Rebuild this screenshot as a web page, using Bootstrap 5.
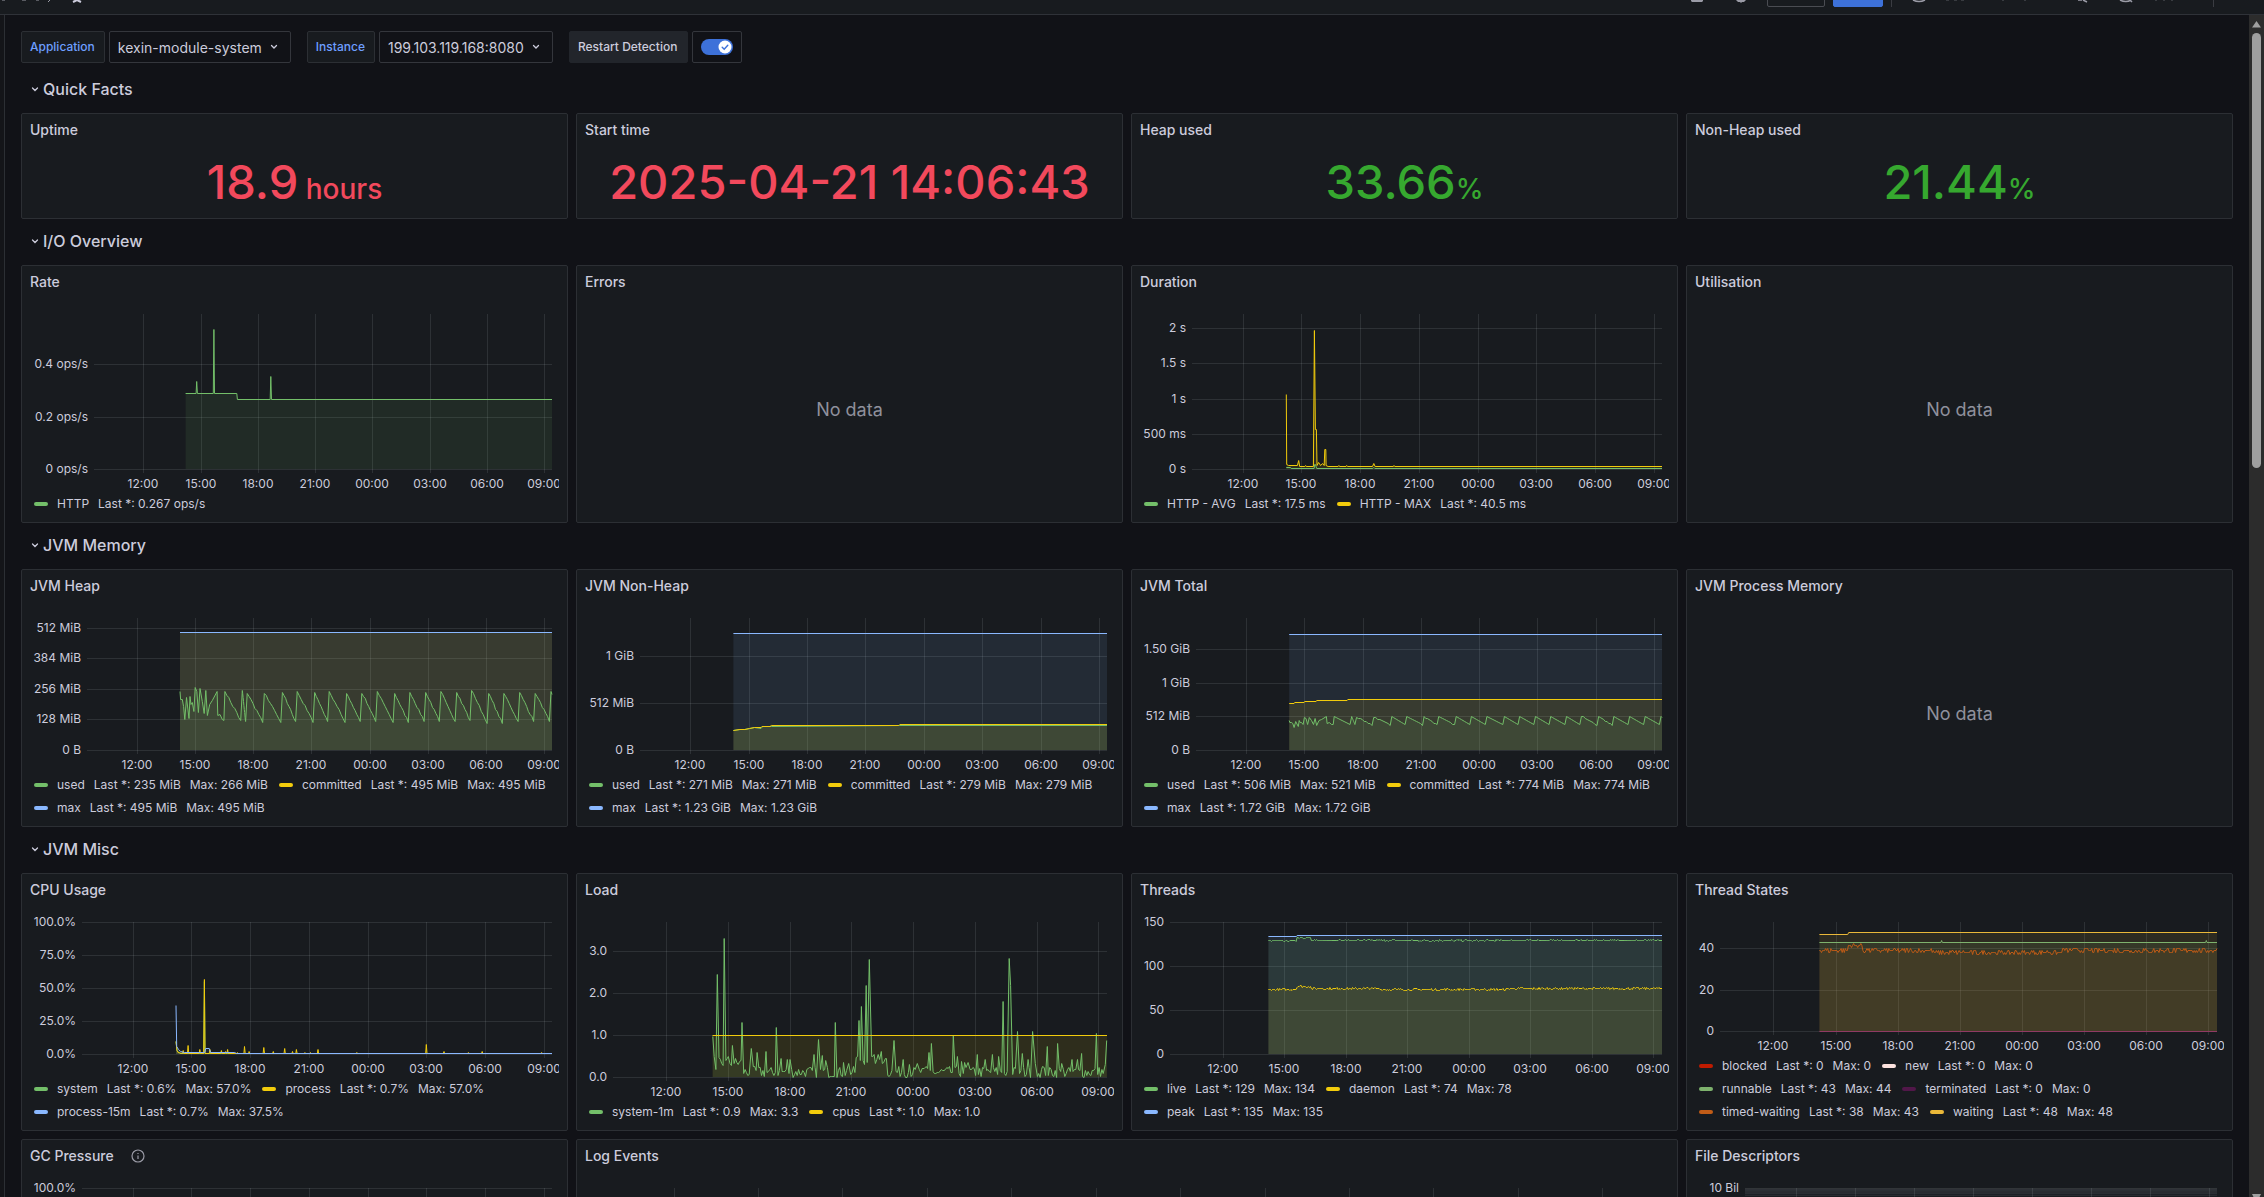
<!DOCTYPE html>
<html lang="en" data-bs-theme="dark">
<head>
<meta charset="utf-8">
<meta name="viewport" content="width=device-width, initial-scale=1">
<title>JVM (Micrometer)</title>
<link href="https://cdn.jsdelivr.net/npm/bootstrap@5.3.0/dist/css/bootstrap.min.css" rel="stylesheet">
<style>
  :root { --canvas:#111217; --surface:#181b1f; --line:#2c2f34; --ink:#ccccdc; --blue:#3d71d9; --link:#6e9fff; }
  body { font-family: Inter, Roboto, "Liberation Sans", sans-serif; font-size:14px; background:var(--canvas); color:var(--ink); height:100vh; overflow:hidden; }
  .topbar { height:15px; background:var(--surface); border-bottom:1px solid #2f3238; padding-bottom:7px; color:#9a9ba6; flex:none; overflow:hidden; }
  .topbar svg { display:block; flex:none; }
  .topbar .tool { height:32px; padding:0; border-radius:2px; border:1px solid #4a4c52; flex:none; }
  .topbar .tool-edit { width:58px; margin-left:21px; background:transparent; }
  .topbar .tool-share { width:50px; margin-left:8px; background:var(--blue); border-color:var(--blue); }
  .topbar .split { width:1px; height:12px; background:#3a3c42; }
  .dock { width:5px; border-right:1px solid var(--line); background:#141519; flex:none; }
  .board { padding:16px 16px 0; min-width:0; }
  .track { width:15px; background:#2c2c2c; flex:none; padding:6px 0 0; }
  .track .thumb { width:9px; height:37%; margin-top:5px; border-radius:5px; background:#9f9f9f; }
  .vars { gap:16px; margin-bottom:12px; }
  .vars .pair { gap:4px; }
  .tag { height:32px; padding:0 9px 0 8px; font-size:12px; font-weight:500; border:1px solid var(--line); border-radius:2px; background:var(--surface); color:var(--link); }
  .tag-plain { padding-right:10px; background:#22252b; border-color:#22252b; color:var(--ink); }
  .pick { height:32px; padding:0 28px 0 8px; font-size:14px; color:var(--ink); border:1px solid #34363c; border-radius:2px; appearance:none;
    background:var(--canvas) url("data:image/svg+xml,%3Csvg xmlns='http://www.w3.org/2000/svg' width='8' height='6'%3E%3Cpath d='M1.500 1.500 4 4l2.500-2.500' fill='none' stroke='%23ccccdc' stroke-width='1.300' stroke-linecap='round'/%3E%3C/svg%3E") no-repeat right 12px center; }
  .flip { height:32px; width:50px; border:1px solid #34363c; border-radius:2px; }
  .flip input { appearance:none; width:32px; height:16px; margin:0; border-radius:8px; background:var(--blue) url("data:image/svg+xml,%3Csvg xmlns='http://www.w3.org/2000/svg' width='32' height='16'%3E%3Ccircle cx='24' cy='8' r='6.500' fill='white'/%3E%3Cpath d='M21.200 8.200l2 2 3.600-4' fill='none' stroke='%233d71d9' stroke-width='1.400' stroke-linecap='round'/%3E%3C/svg%3E"); }
  .section-head { height:30px; margin-bottom:8px; padding:0 0 2px 10px; gap:4px; font-size:16px; font-weight:500; line-height:28px; color:var(--ink); background:none; border:0; }
  .band { --bs-gutter-x:8px; margin-bottom:8px; }
  .panel { height:258px; background:var(--surface); border:1px solid var(--line); border-radius:2px; overflow:hidden; }
  .panel-stat { height:106px; }
  .panel h2 { height:32px; line-height:32px; margin:0; padding:0 8px; font-size:14px; font-weight:500; color:var(--ink); gap:17px; flex:none; }
  .stat { padding-bottom:2px; font-size:47px; font-weight:500; line-height:1; }
  .stat-unit { font-size:28px; }
  .stat-red { color:#f2495c; }
  .stat-green { color:#36a82f; }
  .nodata { padding-bottom:2px; font-size:18px; color:#8f909c; }
  .plot { min-height:0; margin:0 8px; }
  .plot svg { display:block; width:100%; height:100%; }
  .plot text { font-size:12px; fill:var(--ink); }
  .legend { margin:0 8px; padding:0 0 7px 4px; column-gap:11px; font-size:12px; line-height:23px; }
  .legend .entry { gap:9px; }
  .legend .swatch { width:14px; height:4px; border-radius:2px; }
</style>
</head>
<body class="d-flex flex-column">

<header class="topbar d-flex align-items-end">
  <svg width="90" height="7" viewBox="0 0 90 7"><g fill="none" stroke="#9a9ba6"><path d="M2 0h3M22 0h4M36 0h3M50 0l-2 2"/><path stroke="#ccccdc" stroke-width="2" d="M73 2l4-2 4 2"/></g></svg>
  <div class="d-flex align-items-end ms-auto">
    <svg width="56" height="7" viewBox="0 0 56 7"><path d="M1 0h12v1l-1 1H2L1 1z" fill="#9a9ba6"/><path d="M46 0h10l-2 2h-2l-1 1-1-1h-2z" fill="#9a9ba6"/></svg>
    <button class="tool tool-edit" type="button" aria-label="Edit"></button>
    <button class="tool tool-share" type="button" aria-label="Share"></button>
    <span class="split ms-2"></span>
    <svg width="321" height="7" viewBox="0 0 321 7"><g fill="none" stroke="#9a9ba6" stroke-width="1.500"><path d="M21 0q6 3 12 0M186 0h4M191 0l4 2M228 0q6 3 11 0M238 0l2 2"/><path stroke-width="1" stroke-opacity=".5" d="M54 0h3M62 0h3M69 0h3M110 0h2M132 0h2M263 0h2M271 0h2M279 0h2"/></g></svg>
    <span class="split"></span>
    <svg width="50" height="7"></svg>
  </div>
</header>

<div class="d-flex flex-grow-1" style="min-height:0">
  <div class="dock"></div>
  <main class="board flex-grow-1 overflow-hidden">
    <form class="vars d-flex">
      <div class="pair d-flex">
        <label class="tag d-flex align-items-center" for="app">Application</label>
        <select class="pick" id="app"><option>kexin-module-system</option></select>
      </div>
      <div class="pair d-flex">
        <label class="tag d-flex align-items-center" for="inst">Instance</label>
        <select class="pick" id="inst"><option>199.103.119.168:8080</option></select>
      </div>
      <div class="pair d-flex">
        <label class="tag tag-plain d-flex align-items-center" for="restart">Restart Detection</label>
        <span class="flip d-flex align-items-center justify-content-center"><input type="checkbox" role="switch" id="restart" checked></span>
      </div>
    </form>
    <div id="board"></div>
  </main>
  <div class="track d-flex flex-column align-items-center">
    <svg width="9" height="7" viewBox="0 0 9 7"><path d="M4.500 0 9 6.500H0z" fill="#9f9f9f"/></svg>
    <div class="thumb"></div>
    <svg class="mt-auto" width="9" height="3" viewBox="0 0 9 3"><path d="M0 0h9L7.500 3h-6z" fill="#9f9f9f"/></svg>
  </div>
</div>

<script>
// Time is in minutes since the process start; the window spans 24 hours.
const T0 = -288, T1 = 1152, FIRST = -133;
const GREEN = '#73bf69', YELLOW = '#f2cc0c', BLUE = '#8ab8ff';
let seed = 7;
const rnd = () => (seed = (seed * 16807) % 2147483647) / 2147483647;
const flat = v => [[0, v], [T1, v]];
const spikes = (base, list, w = 2) => {
  const out = [[0, base]];
  list.forEach(([t, v]) => out.push([t - w, base], [t, v], [t + w, base]));
  return out.concat([[T1, base]]);
};
const noisy = (level, amp, step = 3, from = 0) => {
  const out = [];
  for (let t = from; t <= T1; t += step) out.push([t, level(t) + Math.round((rnd() - .5) * 2 * amp)]);
  return out;
};
const at = (pts, t) => {
  for (let i = 1; i < pts.length; i++) if (pts[i][0] >= t) {
    const [a, b] = [pts[i - 1], pts[i]];
    return a[1] + (b[1] - a[1]) * (t - a[0]) / ((b[0] - a[0]) || 1);
  }
  return pts[pts.length - 1][1];
};

const heap = [[0,247],[2,212],[7,212],[11,184],[15,131],[20,223],[28,135],[31,226],[34,195],[38,200],[43,163],[47,265],[52,247],[57,160],[62,259],[69,205],[75,156],[80,252],[85,145],[92,191],[100,209],[115,247],[117,145],[124,153],[131,132],[136,125]];
const peaks = [139,193,208,261,317,363,417,462,516,563,611,665,712,761,808,857,903,956,1003,1052,1100,1149];
peaks.forEach((p, i) => {
  const top = [247,251,240,241,243,246,243,247,241,241,246,239,243,243,246,243,252,238,240,243,241,248][i];
  heap.push([p, top]);
  const next = peaks[i + 1];
  if (!next) return heap.push([T1, 235]);
  const low = [125,121,119,118,122,118,120,119,121,122,118,118,123,121,122,126,115,114,121,122,122][i], end = next - 5;
  for (let k = 1; k < 8; k++) heap.push([p + (end - p) * k / 8, top + (low - top) * k / 8 + (rnd() - .3) * 8]);
  heap.push([end, low]);
});
const nonheap = [[0,216],[20,224],[35,229],[50,236],[65,245],[85,240],[90,258],[117,266],[510,268],[513,271],[T1,271]];
const total = heap.map(([t, v]) => [t, v + at(nonheap, t)]);

const bursts = [[16,2.46],[36,3.3],[48,.5],[60,.75],[88,1.3],[115,.7],[132,.6],[158,.63],[188,1.2],[202,.46],[220,.44],[228,.44],[298,.55],[311,.9],[322,.52],[332,.4],[360,1.32],[384,.36],[399,.33],[429,1.35],[436,1.7],[450,2.2],[459,2.8],[466,.5],[481,.42],[494,.63],[506,.46],[531,.87],[558,.44],[576,.32],[599,.33],[619,.22],[633,.6],[640,.8],[704,1],[716,.5],[728,.38],[737,.35],[747,.35],[774,.55],[797,.42],[818,.55],[836,.5],[849,1.8],[867,2.84],[871,2.2],[891,1.1],[905,.58],[922,.42],[935,1.1],[943,.33],[964,.25],[978,.73],[1008,.82],[1020,.33],[1050,.42],[1066,.42],[1078,.56],[1121,1.04],[1147,.3],[1151,.87]];
const load = [[3,.97],[7,.5],[12,.2]];
for (let t = 17; t < T1; t += 4) {
  const near = bursts.some(b => Math.abs(b[0] - t) < 3);
  if (!near) load.push([t, (t > 420 && t < 510 ? .3 : t < 90 ? .22 : 0) + rnd() * .26]);
}
load.push(...bursts);
load.sort((a, b) => a[0] - b[0]);

const liveLevel = t => t > 82 && t < 125 ? 133 : t < 82 ? 129 : t < 330 ? 130 : t < 700 ? 129.400 : 130;
const daemonLevel = t => t > 82 && t < 125 ? 77 : t < 82 ? 74 : t < 330 ? 75.300 : t < 700 ? 74 : 75.300;
const waitLevel = t => t > 83 && t < 125 ? 41.500 : t < 82 ? 39 : t < 330 ? 39.300 : t < 700 ? 38 : 39.200;

const sections = [
  { title: 'Quick Facts', panels: [
    { title: 'Uptime', stat: '18.9', unit: '\u00a0hours', tone: 'red' },
    { title: 'Start time', stat: '2025-04-21 14:06:43', tone: 'red' },
    { title: 'Heap used', stat: '33.66', unit: '%', tone: 'green' },
    { title: 'Non-Heap used', stat: '21.44', unit: '%', tone: 'green' } ] },
  { title: 'I/O Overview', panels: [
    { title: 'Rate', left: 64, max: .5905, y: [[0,'0 ops/s'],[.2,'0.2 ops/s'],[.4,'0.4 ops/s']],
      series: [{ c: GREEN, d: [[0,.29],[33,.29],[35,.336],[37,.29],[87,.29],[89,.534],[91,.29],[161,.29],[163,.267],[266,.267],[268,.355],[270,.267],[T1,.267]] }],
      legend: [[GREEN,'HTTP','Last *: 0.267 ops/s']] },
    { title: 'Errors' },
    { title: 'Duration', left: 52, max: 2.2, y: [[0,'0 s'],[.5,'500 ms'],[1,'1 s'],[1.5,'1.5 s'],[2,'2 s']],
      series: [
        { c: GREEN, d: [[1,.03],[14,.03],[16,.0175],[86,.0175],[88,.07],[90,.07],[94,.0175],[266,.0175],[269,.03],[272,.0175],[T1,.0175]] },
        { c: YELLOW, d: [[1,1.064],[2,.07],[8,.055],[35,.05],[39,.13],[42,.04],[58,.04],[60,.055],[62,.04],[84,.04],[87,1.97],[90,.57],[93,.57],[95,.06],[100,.1],[106,.06],[112,.08],[117,.06],[119,.28],[122,.28],[123,.06],[129,.04],[160,.04],[162,.055],[164,.04],[184,.04],[186,.055],[188,.04],[265,.04],[269,.085],[273,.04],[329,.04],[331,.055],[333,.04],[T1,.04]] }],
      legend: [[GREEN,'HTTP - AVG','Last *: 17.5 ms'],[YELLOW,'HTTP - MAX','Last *: 40.5 ms']] },
    { title: 'Utilisation' } ] },
  { title: 'JVM Memory', panels: [
    { title: 'JVM Heap', left: 57, max: 553.700, y: [[0,'0 B'],[128,'128 MiB'],[256,'256 MiB'],[384,'384 MiB'],[512,'512 MiB']],
      series: [{ c: GREEN, d: heap },{ c: YELLOW, d: flat(495) },{ c: BLUE, d: flat(495) }],
      legend: [[GREEN,'used','Last *: 235 MiB','Max: 266 MiB'],[YELLOW,'committed','Last *: 495 MiB','Max: 495 MiB'],[BLUE,'max','Last *: 495 MiB','Max: 495 MiB']] },
    { title: 'JVM Non-Heap', left: 55, max: 1436, y: [[0,'0 B'],[512,'512 MiB'],[1024,'1 GiB']],
      series: [{ c: GREEN, d: nonheap },{ c: YELLOW, d: [[0,219],[20,226],[35,231],[50,240],[65,250],[85,252],[88,260],[113,264],[117,271],[510,272],[513,282],[T1,282]] },{ c: BLUE, d: flat(1270) }],
      legend: [[GREEN,'used','Last *: 271 MiB','Max: 271 MiB'],[YELLOW,'committed','Last *: 279 MiB','Max: 279 MiB'],[BLUE,'max','Last *: 1.23 GiB','Max: 1.23 GiB']] },
    { title: 'JVM Total', left: 56, max: 2005, y: [[0,'0 B'],[512,'512 MiB'],[1024,'1 GiB'],[1536,'1.50 GiB']],
      series: [{ c: GREEN, d: total },{ c: YELLOW, d: [[0,715],[15,715],[17,732],[46,732],[48,747],[83,747],[85,762],[179,762],[181,776],[T1,776]] },{ c: BLUE, d: flat(1765) }],
      legend: [[GREEN,'used','Last *: 506 MiB','Max: 521 MiB'],[YELLOW,'committed','Last *: 774 MiB','Max: 774 MiB'],[BLUE,'max','Last *: 1.72 GiB','Max: 1.72 GiB']] },
    { title: 'JVM Process Memory' } ] },
  { title: 'JVM Misc', panels: [
    { title: 'CPU Usage', left: 52, max: 100, y: [[0,'0.0%'],[25,'25.0%'],[50,'50.0%'],[75,'75.0%'],[100,'100.0%']],
      series: [
        { c: GREEN, d: [[0,10],[3,3],[12,1],[85,1],[87,55],[89,1],[T1,.6]] },
        { c: YELLOW, d: [[0,10],[3,3],[6,1.2]].concat(spikes(.7, [[22,3],[37,7],[73,4],[87,57],[104,4],[139,3],[152,2.5],[158,4],[188,1.8],[210,6],[224,2.5],[269,5.5],[298,2.5],[333,4.5],[357,2.5],[369,4],[395,1.5],[412,1.5],[435,4],[554,1.5],[767,7.5],[821,2.5],[896,1.5],[938,2.5],[1120,1.5]]).slice(1)) },
        { c: BLUE, d: [[0,37.5],[2,6],[8,4],[14,2],[25,1.2],[88,1.2],[91,4.5],[102,4.5],[106,1.5],[180,1.2],[185,.6],[T1,.6]] }],
      legend: [[GREEN,'system','Last *: 0.6%','Max: 57.0%'],[YELLOW,'process','Last *: 0.7%','Max: 57.0%'],[BLUE,'process-15m','Last *: 0.7%','Max: 37.5%']], wrapAfter: 2 },
    { title: 'Load', left: 28, max: 3.69, y: [[0,'0.0'],[1,'1.0'],[2,'2.0'],[3,'3.0']],
      series: [{ c: GREEN, d: load },{ c: YELLOW, d: [[2,1],[T1,1]] }],
      legend: [[GREEN,'system-1m','Last *: 0.9','Max: 3.3'],[YELLOW,'cpus','Last *: 1.0','Max: 1.0']] },
    { title: 'Threads', left: 30, max: 150, y: [[0,'0'],[50,'50'],[100,'100'],[150,'150']],
      series: [{ c: GREEN, d: noisy(liveLevel, .8) },{ c: YELLOW, d: noisy(daemonLevel, .9) },{ c: BLUE, d: [[0,134],[82,134],[84,135.300],[T1,135.300]] }],
      legend: [[GREEN,'live','Last *: 129','Max: 134'],[YELLOW,'daemon','Last *: 74','Max: 78'],[BLUE,'peak','Last *: 135','Max: 135']], wrapAfter: 2 },
    { title: 'Thread States', left: 25, max: 52.700, y: [[0,'0'],[20,'20'],[40,'40']],
      series: [{ c: '#7eb26d', d: spikes(43, [[354,44],[1121,44]]) },{ c: '#c15c17', d: noisy(waitLevel, 1) },{ c: '#eab839', d: [[0,47],[82,47],[85,48],[T1,48]] },{ c: '#8f3a63', d: flat(0) }],
      legend: [['#bf1b00','blocked','Last *: 0','Max: 0'],['#fce2de','new','Last *: 0','Max: 0'],['#7eb26d','runnable','Last *: 43','Max: 44'],['#511749','terminated','Last *: 0','Max: 0'],['#c15c17','timed-waiting','Last *: 38','Max: 43'],['#eab839','waiting','Last *: 48','Max: 48']], wrapAfter: 2 },
    { title: 'GC Pressure', info: true, left: 52, max: 100, y: [[100,'100.0%']], bare: true, series: [], legend: [] },
    { title: 'Log Events', wide: true, left: 64, max: 1, y: [], step: 120, bare: true, series: [], legend: [] },
    { title: 'File Descriptors', left: 50, max: 10, y: [[10,'10 Bil']], dense: true, bare: true, series: [], legend: [] } ] }
];

const chevron = '<svg width="8" height="6" viewBox="0 0 8 6"><path d="M1.500 2 4 4.500 6.500 2" fill="none" stroke="#ccccdc" stroke-width="1.300" stroke-linecap="round"/></svg>';
const info = '<svg width="14" height="14" viewBox="0 0 14 14" fill="none" stroke="#9a9ba6" stroke-width="1.200"><circle cx="7" cy="7" r="6"/><path d="M7 6.500V10M7 4v1"/></svg>';
const charts = [];
const body = p => {
  if (p.stat) return `<div class="flex-grow-1 d-flex align-items-center justify-content-center"><div class="stat stat-${p.tone}">${p.stat}<span class="stat-unit">${p.unit || ''}</span></div></div>`;
  if (!p.series) return '<div class="nodata flex-grow-1 d-flex align-items-center justify-content-center">No data</div>';
  const items = p.legend.map((l, i) => (p.wrapAfter && i && i % p.wrapAfter === 0 ? '<div class="w-100"></div>' : '') +
    `<div class="entry d-flex align-items-center"><span class="swatch" style="background:${l[0]}"></span>${l.slice(1).map(s => `<span>${s}</span>`).join('')}</div>`).join('');
  return `<div class="plot flex-grow-1" data-chart="${charts.push(p) - 1}"></div><div class="legend d-flex flex-wrap">${items}</div>`;
};
document.getElementById('board').innerHTML = sections.map(s =>
  `<button type="button" class="section-head d-flex align-items-center">${chevron}<span>${s.title}</span></button><div class="band row row-gap-2">` +
  s.panels.map(p => `<div class="${p.wide ? 'col-6' : 'col-3'}"><section class="panel d-flex flex-column${p.stat ? ' panel-stat' : ''}"><h2 class="d-flex align-items-center">${p.title}${p.info ? info : ''}</h2>${body(p)}</section></div>`).join('') + '</div>').join('');

function draw(host) {
  const p = charts[host.dataset.chart], W = host.clientWidth, H = host.clientHeight;
  const L = p.left, R = W - 7, top = 16, base = H - 23;
  const X = t => L + (t - T0) / (T1 - T0) * (R - L), Y = v => base - v / p.max * (base - top);
  const snap = n => Math.round(n);
  let g = '', labels = '', lines = '';
  const step = p.step || 180, start = p.step ? -253 : FIRST;
  for (let t = start, h = 12; t < T1; t += step, h += 3) {
    g += `<rect x="${snap(X(t))}" y="${top}" width="1" height="${base - top + 4}"/>`;
    if (!p.bare) labels += `<text x="${snap(X(t))}" y="${base + 19}" text-anchor="middle">${String(h % 24).padStart(2, '0')}:00</text>`;
  }
  p.y.forEach(([v, name]) => {
    g += `<rect x="${L}" y="${snap(Y(v))}" width="${R - L}" height="1"/>`;
    labels += `<text x="${L - 6}" y="${snap(Y(v)) + 4}" text-anchor="end">${name}</text>`;
  });
  if (p.dense) for (let k = 9; k > 1; k--) g += `<rect x="${L}" y="${top - 17 * Math.log10(k / 10)}" width="${R - L}" height="1"/>`;
  p.series.forEach(s => {
    const pts = s.d.map(([t, v]) => `${X(t).toFixed(1)},${snap(Y(v)) + .5}`).join(' ');
    const x0 = X(s.d[0][0]).toFixed(1), x1 = X(s.d[s.d.length - 1][0]).toFixed(1);
    lines = `<polygon points="${x0},${base} ${pts} ${x1},${base}" fill="${s.c}" fill-opacity=".1"/>` + lines + `<polyline points="${pts}" fill="none" stroke="${s.c}" stroke-linejoin="bevel"/>`;
  });
  host.innerHTML = `<svg role="img" aria-label="${p.title}"><g fill="#f0faff" fill-opacity=".1">${g}</g>${lines}${labels}</svg>`;
}
const drawAll = () => document.querySelectorAll('.plot').forEach(draw);
drawAll();
addEventListener('resize', drawAll);
</script>
<script src="https://cdn.jsdelivr.net/npm/bootstrap@5.3.0/dist/js/bootstrap.bundle.min.js"></script>
</body>
</html>
